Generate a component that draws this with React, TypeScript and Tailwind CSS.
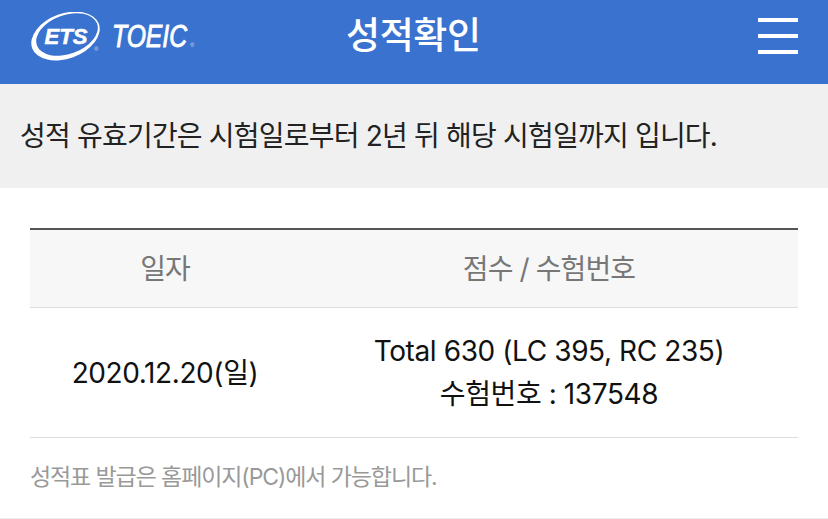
const font = "font-['Inter','Noto_Sans_CJK_KR',sans-serif]";

function Logo() {
  return (
    <svg width="190" height="60" viewBox="0 0 190 60" className="block">
      <ellipse cx="35.5" cy="24" rx="35.5" ry="22.5" fill="#fff" transform="rotate(-20 35.5 24)" />
      <ellipse cx="37" cy="22.5" rx="32" ry="19.5" fill="#3a72cf" transform="rotate(-20 37 22.5)" />
      <text x="14.5" y="32" fontFamily="Liberation Sans" fontStyle="italic" fontWeight="700" fontSize="22" textLength="43" lengthAdjust="spacingAndGlyphs" fill="#fff" stroke="#fff" strokeWidth="0.5">ETS</text>
      <text x="64" y="39" fontFamily="Liberation Sans" fontSize="6" fill="#cfdcf2">®</text>
      <text x="82" y="34.5" fontFamily="Liberation Sans" fontStyle="italic" fontSize="31" textLength="75" lengthAdjust="spacingAndGlyphs" fill="#fff" stroke="#fff" strokeWidth="0.9">TOEIC</text>
      <text x="160" y="35" fontFamily="Liberation Sans" fontSize="6" fill="#cfdcf2">®</text>
    </svg>
  );
}

export default function App() {
  return (
    <div className={`w-[828px] h-[519px] bg-white overflow-hidden ${font}`}>
      <header className="h-[84px] bg-[#3a72cf] flex items-start pt-[12px] pl-[30px] pr-[30px] justify-between relative">
        <Logo />
        <h1 className="absolute left-[346px] top-[8px] text-[37px] font-medium text-white tracking-[-0.4px]">성적확인</h1>
        <div className="w-[40px] flex flex-col gap-[12px] pt-[6px]">
          <span className="h-[4px] bg-white" />
          <span className="h-[4px] bg-white" />
          <span className="h-[4px] bg-white" />
        </div>
      </header>
      <div className="h-[104px] bg-[#f0f0f0] flex items-center pl-[20px] text-[28px] tracking-[-0.8px] text-[#222]">
        성적 유효기간은 시험일로부터 2년 뒤 해당 시험일까지 입니다.
      </div>
      <div className="px-[30px] pt-[40px]">
        <div className="border-t-2 border-[#555] border-b border-b-[#ddd] bg-[#f7f7f7] h-[80px] flex items-center text-[28px] text-[#777] tracking-[-0.9px]">
          <div className="w-[270px] text-center">일자</div>
          <div className="flex-1 text-center">점수 / 수험번호</div>
        </div>
        <div className="h-[130px] border-b border-[#ddd] flex items-center text-[28px] text-[#111] tracking-[-0.4px]">
          <div className="w-[270px] text-center">2020.12.20(일)</div>
          <div className="flex-1 text-center leading-[43px]">
            <div>Total 630 (LC 395, RC 235)</div>
            <div>수험번호 : 137548</div>
          </div>
        </div>
        <p className="mt-[22px] text-[23px] leading-[34px] text-[#999] tracking-[-1.1px]">성적표 발급은 홈페이지(PC)에서 가능합니다.</p>
      </div>
      <div className="mt-[24px] border-t border-[#eee]" />
    </div>
  );
}
